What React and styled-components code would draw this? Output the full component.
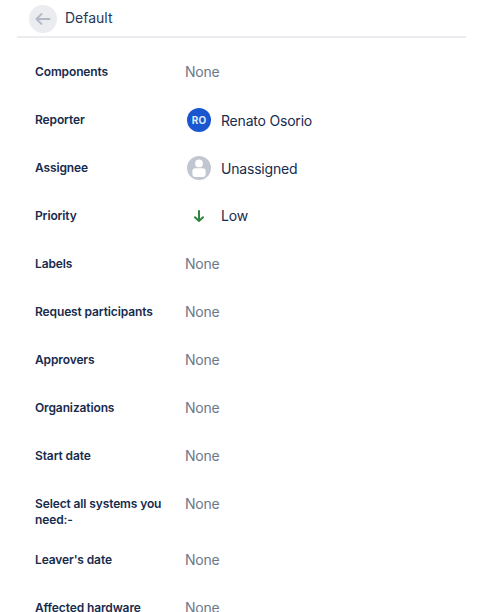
import React from "react";
import styled, { createGlobalStyle } from "styled-components";

const Global = createGlobalStyle`
  html, body { margin: 0; padding: 0; background: #fff; height: 100%; overflow: hidden; }
  body { font-family: Inter, "Noto Sans", sans-serif; color: #172b4d; }
`;
const Page = styled.div`
  width: 485px;
  height: 612px;
  overflow: hidden;
  padding: 0 19px 0 17px;
  box-sizing: border-box;
`;
const Header = styled.header`
  display: flex;
  align-items: center;
  gap: 8px;
  height: 36px;
  padding: 0 0 0 12px;
  margin-bottom: 10px;
  border-bottom: 2px solid #ebecf0;
  box-sizing: content-box;
`;
const BackButton = styled.button`
  width: 28px;
  height: 28px;
  margin-top: 2px;
  padding: 0;
  border: 0;
  border-radius: 50%;
  background: #ebecf0;
  display: flex;
  align-items: center;
  justify-content: center;
`;
const Title = styled.span`
  font-size: 14px;
  line-height: 20px;
  color: #253858;
`;
const List = styled.div`
  display: flex;
  flex-direction: column;
`;
const Row = styled.div`
  display: grid;
  grid-template-columns: 150px 1fr;
  min-height: 48px;
  box-sizing: border-box;
  padding: 12px 0 8px 18px;
`;
const Label = styled.div`
  font-size: 12px;
  font-weight: 600;
  line-height: 16px;
  letter-spacing: -0.12px;
  padding: 4px 16px 0 0;
  color: #172b4d;
`;
const Value = styled.div`
  display: flex;
  align-items: center;
  height: 24px;
  font-size: 14px;
  letter-spacing: -0.2px;
  color: ${(p) => (p.$muted ? "#6b778c" : "#172b4d")};
  gap: 10px;
`;
const ValueText = styled.span`
  margin-bottom: ${(p) => (p.$lift ? "2px" : "0")};
`;
const IconSlot = styled.span`
  width: 24px;
  height: 24px;
  margin-left: 2px;
  display: flex;
  align-items: center;
  justify-content: center;
  flex: none;
`;
const Avatar = styled(IconSlot)`
  border-radius: 50%;
  background: #1a56cf;
  color: #deebff;
  font-size: 10px;
  font-weight: 700;
  letter-spacing: 0;
`;

const rows = [
  ["Components"],
  ["Reporter", "reporter", "Renato Osorio"],
  ["Assignee", "assignee", "Unassigned"],
  ["Priority", "priority", "Low"],
  ["Labels"],
  ["Request participants"],
  ["Approvers"],
  ["Organizations"],
  ["Start date"],
  ["Select all systems you need:-"],
  ["Leaver's date"],
  ["Affected hardware"],
];

const Lead = ({ kind }) => {
  if (kind === "reporter") return <Avatar>RO</Avatar>;
  if (kind === "assignee")
    return (
      <IconSlot>
        <svg width="24" height="24" viewBox="0 0 24 24">
          <circle cx="12" cy="12" r="12" fill="#c1c7d0" />
          <circle cx="12" cy="7.4" r="3.9" fill="#fff" />
          <rect x="5.4" y="12.2" width="13.2" height="8.8" rx="3" fill="#fff" />
        </svg>
      </IconSlot>
    );
  return (
    <IconSlot>
      <svg width="16" height="16" viewBox="0 0 16 16" fill="none" stroke="#2e8540" strokeWidth="2" strokeLinecap="round" strokeLinejoin="round">
        <path d="M8 3v10M4 9.2 8 13l4-3.8" />
      </svg>
    </IconSlot>
  );
};

export default function App() {
  return (
    <Page>
      <Global />
      <Header>
        <BackButton aria-label="Back">
          <svg width="18" height="18" viewBox="0 0 18 18" fill="none" stroke="#b3b9c4" strokeWidth="1.8" strokeLinecap="round" strokeLinejoin="round">
            <path d="M15.6 9H2.4M7.6 4 2.4 9l5.2 5" />
          </svg>
        </BackButton>
        <Title>Default</Title>
      </Header>
      <List>
        {rows.map(([label, kind, text]) => (
          <Row key={label}>
            <Label>{label}</Label>
            <Value $muted={!kind}>
              {kind && <Lead kind={kind} />}
              <ValueText $lift={!kind || kind === "priority"}>{text || "None"}</ValueText>
            </Value>
          </Row>
        ))}
      </List>
    </Page>
  );
}
